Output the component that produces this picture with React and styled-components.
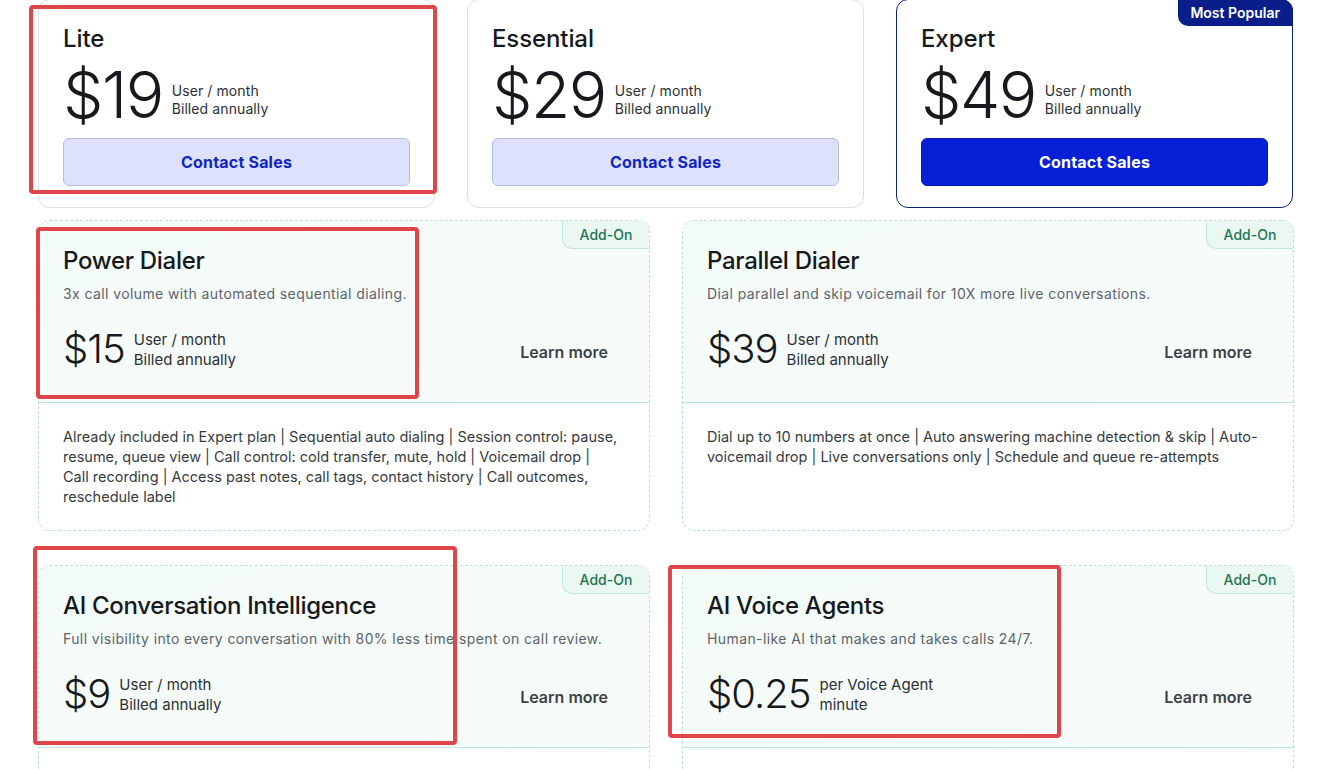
import React from "react";
import styled, { createGlobalStyle } from "styled-components";

const GlobalStyle = createGlobalStyle`
  body {
    margin: 0;
    background: #ffffff;
    font-family: Inter, "Noto Sans", sans-serif;
    color: #16191d;
  }
`;

const plans = [
  { name: "Lite", price: "$19", featured: false },
  { name: "Essential", price: "$29", featured: false },
  { name: "Expert", price: "$49", featured: true },
];

const addons = [
  {
    name: "Power Dialer",
    blurb: "3x call volume with automated sequential dialing.",
    price: "$15",
    unit: ["User / month", "Billed annually"],
    details:
      "Already included in Expert plan | Sequential auto dialing | Session control: pause, resume, queue view | Call control: cold transfer, mute, hold | Voicemail drop | Call recording | Access past notes, call tags, contact history | Call outcomes, reschedule label",
  },
  {
    name: "Parallel Dialer",
    blurb: "Dial parallel and skip voicemail for 10X more live conversations.",
    price: "$39",
    unit: ["User / month", "Billed annually"],
    details:
      "Dial up to 10 numbers at once | Auto answering machine detection & skip | Auto-voicemail drop | Live conversations only | Schedule and queue re-attempts",
  },
  {
    name: "AI Conversation Intelligence",
    blurb: "Full visibility into every conversation with 80% less time spent on call review.",
    price: "$9",
    unit: ["User / month", "Billed annually"],
    details: "",
  },
  {
    name: "AI Voice Agents",
    blurb: "Human-like AI that makes and takes calls 24/7.",
    price: "$0.25",
    unit: ["per Voice Agent", "minute"],
    details: "",
  },
];

// red annotation boxes drawn over the screenshot
const marks = [
  { left: 29, top: 5, width: 408, height: 189 },
  { left: 36, top: 227, width: 383, height: 172 },
  { left: 33, top: 546, width: 424, height: 199 },
  { left: 668, top: 565, width: 393, height: 173 },
];

const App = () => {
  return (
    <Page>
      <GlobalStyle />
      <PlanRow>
        {plans.map((p) => (
          <PlanCard key={p.name} featured={p.featured}>
            {p.featured && <PopularBadge>Most Popular</PopularBadge>}
            <PlanName>{p.name}</PlanName>
            <PriceRow>
              <BigPrice>{p.price}</BigPrice>
              <PriceNote>
                <span>User / month</span>
                <span>Billed annually</span>
              </PriceNote>
            </PriceRow>
            <SalesButton featured={p.featured}>Contact Sales</SalesButton>
          </PlanCard>
        ))}
      </PlanRow>
      <AddonGrid>
        {addons.map((a) => (
          <AddonCard key={a.name}>
            <AddonBadge>Add-On</AddonBadge>
            <AddonTop>
              <AddonName>{a.name}</AddonName>
              <AddonBlurb>{a.blurb}</AddonBlurb>
              <AddonPriceRow>
                <AddonPriceLeft>
                  <MidPrice>{a.price}</MidPrice>
                  <AddonNote>
                    <span>{a.unit[0]}</span>
                    <span>{a.unit[1]}</span>
                  </AddonNote>
                </AddonPriceLeft>
                <LearnMore>Learn more</LearnMore>
              </AddonPriceRow>
            </AddonTop>
            <AddonDetails>{a.details}</AddonDetails>
          </AddonCard>
        ))}
      </AddonGrid>
      {marks.map((m, i) => (
        <Mark key={i} style={m} />
      ))}
    </Page>
  );
};

export default App;

const Page = styled.div`
  position: relative;
  width: 1333px;
  height: 770px;
  overflow: hidden;
  padding-left: 38px;
  box-sizing: border-box;
`;

const PlanRow = styled.div`
  display: grid;
  grid-template-columns: repeat(3, 397px);
  gap: 32px;
  margin-top: -1px;
`;

const PlanCard = styled.div`
  position: relative;
  height: 209px;
  box-sizing: border-box;
  border: 1px solid ${(p) => (p.featured ? "#0d2170" : "#dcdde0")};
  border-radius: 12px;
  padding: 23px 24px 0 24px;
  display: flex;
  flex-direction: column;
  background: #fff;
`;

const PopularBadge = styled.div`
  position: absolute;
  top: -1px;
  right: -1px;
  height: 27px;
  padding: 0 13px 0 12px;
  display: flex;
  align-items: center;
  background: #0a1e8a;
  color: #fff;
  font-size: 14px;
  font-weight: 600;
  border-radius: 0 12px 0 10px;
`;

const PlanName = styled.div`
  font-size: 24px;
  line-height: 32px;
  font-weight: 500;
  letter-spacing: -0.1px;
  color: #16191d;
`;

const PriceRow = styled.div`
  display: flex;
  align-items: center;
  margin-top: 9px;
  height: 62px;
`;

const BigPrice = styled.div`
  font-size: 64px;
  line-height: 62px;
  font-weight: 340;
  letter-spacing: -1.5px;
  color: #16191d;
`;

const PriceNote = styled.div`
  display: flex;
  flex-direction: column;
  margin-left: 9px;
  margin-top: 10px;
  font-size: 14px;
  line-height: 18px;
  letter-spacing: 0.1px;
  color: #2c3036;
`;

const SalesButton = styled.button`
  margin-top: 12px;
  height: 48px;
  width: 100%;
  border-radius: 6px;
  border: 1px solid ${(p) => (p.featured ? "#0419b8" : "#b4bbdb")};
  background: ${(p) => (p.featured ? "#0520d6" : "#dde1fb")};
  color: ${(p) => (p.featured ? "#ffffff" : "#1027c2")};
  font-family: inherit;
  font-size: 16px;
  font-weight: 700;
  letter-spacing: 0.2px;
  cursor: pointer;
`;

const AddonGrid = styled.div`
  display: grid;
  grid-template-columns: repeat(2, 612px);
  column-gap: 32px;
  row-gap: 34px;
  margin-top: 12px;
`;

const AddonCard = styled.div`
  position: relative;
  height: 311px;
  box-sizing: border-box;
  border: 1px dashed #b8e4d4;
  border-radius: 12px;
  overflow: hidden;
  display: flex;
  flex-direction: column;
  background: #fff;
`;

const AddonBadge = styled.div`
  position: absolute;
  top: 0;
  right: 0;
  height: 27px;
  width: 86px;
  display: flex;
  align-items: center;
  justify-content: center;
  background: #eaf8f1;
  border-left: 1px solid #bfe7d6;
  border-bottom: 1px solid #bfe7d6;
  border-radius: 0 0 0 10px;
  color: #1d7452;
  font-size: 14px;
  font-weight: 500;
`;

const AddonTop = styled.div`
  height: 182px;
  box-sizing: border-box;
  padding: 24px 41px 0 24px;
  background: linear-gradient(160deg, #f3fbf8 0%, #f7fcfa 100%);
  border-bottom: 1px solid #bde8da;
  display: flex;
  flex-direction: column;
`;

const AddonName = styled.div`
  font-size: 24px;
  line-height: 32px;
  font-weight: 500;
  letter-spacing: -0.3px;
  color: #16191d;
`;

const AddonBlurb = styled.div`
  margin-top: 7px;
  font-size: 14px;
  line-height: 20px;
  letter-spacing: 0.4px;
  color: #5d636b;
`;

const AddonPriceRow = styled.div`
  margin-top: 22px;
  display: flex;
  align-items: center;
  justify-content: space-between;
`;

const AddonPriceLeft = styled.div`
  display: flex;
  align-items: center;
`;

const MidPrice = styled.div`
  font-size: 40px;
  line-height: 46px;
  font-weight: 340;
  letter-spacing: -1px;
  color: #16191d;
`;

const AddonNote = styled.div`
  display: flex;
  flex-direction: column;
  margin-left: 9px;
  margin-top: 2px;
  font-size: 15px;
  line-height: 20px;
  color: #2c3036;
`;

const LearnMore = styled.div`
  font-size: 16px;
  font-weight: 600;
  color: #3d4248;
  margin-top: 6px;
  cursor: pointer;
`;

const AddonDetails = styled.div`
  padding: 24px 30px 0 24px;
  font-size: 14.5px;
  line-height: 20px;
  color: #363b41;
`;

const Mark = styled.div`
  position: absolute;
  box-sizing: border-box;
  border: 4px solid #e0454a;
  border-radius: 4px;
  pointer-events: none;
`;
